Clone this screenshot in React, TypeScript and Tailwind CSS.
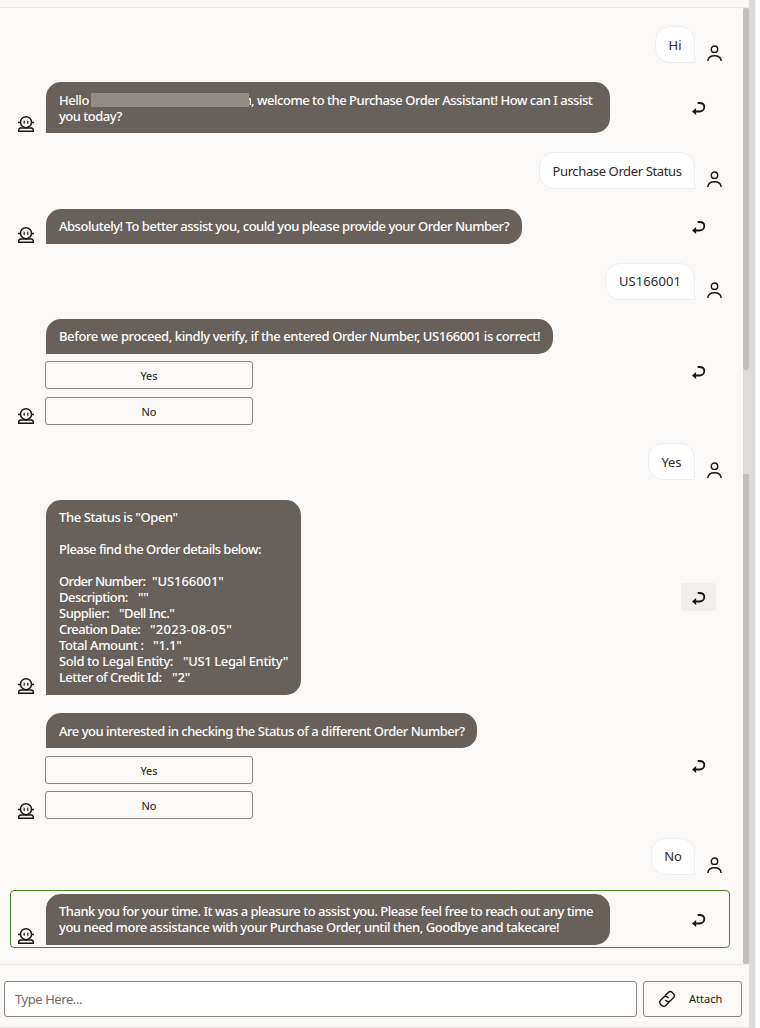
import type { ReactNode } from "react";

function BotIcon() {
  return (
    <svg className="mb-px h-4 w-[18px] shrink-0" viewBox="0 0 18 16" fill="none" stroke="#161513" strokeWidth="1.4">
      <circle cx="9" cy="6.200" r="5.500" />
      <path d="M1 6.500h2.600M14.400 6.500H17" strokeWidth="1.6" />
      <path d="M7.200 4.800v2.900M10.800 4.800v2.900" strokeWidth="1.2" />
      <path d="M1.700 15.200v-1c0-1.300.9-2.200 2.200-2.200h10.200c1.300 0 2.200.9 2.200 2.200v1z" />
    </svg>
  );
}

function UserIcon() {
  return (
    <svg className="h-4 w-4 shrink-0" viewBox="0 0 16 16" fill="none" stroke="#161513" strokeWidth="1.4">
      <circle cx="8.500" cy="4.200" r="3.200" />
      <path d="M1.800 16c.3-3.500 2.900-5.300 6.700-5.300s6.400 1.800 6.700 5.300" />
    </svg>
  );
}

function ReplyIcon() {
  return (
    <svg className="h-[13px] w-[14px]" viewBox="0 0 14 13" fill="none">
      <path d="M5.700 1h1.700c3 0 4.900 1.700 4.900 4.100S10.400 9.500 7.400 9.500H3.300" stroke="#161513" strokeWidth="1.8" />
      <path d="M0 9.500 4.100 5.900v7.100z" fill="#161513" />
    </svg>
  );
}

function AttachIcon() {
  return (
    <svg className="h-[18px] w-[18px]" viewBox="0 0 18 18" fill="none" stroke="#161513" strokeWidth="1.4">
      <g transform="rotate(-45 9 9)">
        <path d="M8.200 12.700H3.600A2.900 2.900 0 0 1 .7 9.800V8.200a2.900 2.900 0 0 1 2.900-2.900h4.300a2.900 2.900 0 0 1 2.900 2.900v1.300" />
        <path d="M9.800 5.300h4.600a2.900 2.900 0 0 1 2.900 2.900v1.600a2.900 2.900 0 0 1-2.900 2.900h-4.300a2.900 2.900 0 0 1-2.900-2.900V8.500" />
      </g>
    </svg>
  );
}

function UserRow({ className, bubble, children }: { className: string; bubble: string; children: ReactNode }) {
  return (
    <div className={`flex shrink-0 items-start justify-end pr-[21px] ${className}`}>
      <div
        className={`flex h-[37px] items-center justify-center rounded-[15px] rounded-br-none border border-[#efeeec] bg-white text-[13px] whitespace-nowrap text-[#2b2a28] ${bubble}`}
      >
        {children}
      </div>
      <div className="ml-[11px] pt-[19px]">
        <UserIcon />
      </div>
    </div>
  );
}

function BotRow({
  className,
  bubble,
  choices,
  reply = "pt-0.5",
  children,
}: {
  className: string;
  bubble: string;
  choices?: string;
  reply?: string;
  children: ReactNode;
}) {
  return (
    <div className={`flex shrink-0 items-end pl-[17px] ${className}`}>
      <BotIcon />
      <div className="ml-[10px] flex flex-col">
        <div
          className={`ml-px flex flex-col justify-center rounded-[15px] rounded-bl-none bg-[#68605a] pl-[13px] text-[13px] leading-4 font-medium whitespace-nowrap text-white ${bubble}`}
        >
          {children}
        </div>
        {choices && (
          <div className={`flex flex-col ${choices}`}>
            <Choice>Yes</Choice>
            <Choice>No</Choice>
          </div>
        )}
      </div>
      <div className="mr-[27px] ml-auto self-center">
        <button className={`flex h-7 w-[35px] items-center justify-center rounded-[3px] ${reply}`}>
          <ReplyIcon />
        </button>
      </div>
    </div>
  );
}

function Choice({ children }: { children: ReactNode }) {
  return (
    <button className="flex h-7 w-[208px] items-center justify-center rounded-[3px] border border-[#8b8580] pt-0.5 text-[11px] text-[#161513]">
      {children}
    </button>
  );
}

function Detail({ label, labelClass, value, valueClass }: { label: string; labelClass: string; value: string; valueClass: string }) {
  return (
    <div className="flex">
      <span className={labelClass}>{label}</span>
      <span className={valueClass}>"{value}"</span>
    </div>
  );
}

export default function App() {
  return (
    <div className="flex h-[1028px] w-[760px] overflow-hidden bg-white font-['Noto_Sans',sans-serif]">
      <div className="flex w-[749px] flex-col border-b border-[#e6e5e3] bg-[#fbf9f8]">
        <div className="h-2 shrink-0 border-b border-[#edebe9]" />
        <div className="flex h-[957px] shrink-0 border-b border-[#edebe9]">
          <div className="flex w-[743px] flex-col">
            <UserRow className="mt-[18px]" bubble="w-10 pt-0.5">
              Hi
            </UserRow>
            <BotRow className="mt-[19px]" bubble="h-[51px] w-[564px]">
              <div className="flex">
                <span className="w-8 tracking-[-0.45px]">Hello</span>
                <span className="mt-px h-[14px] w-[158px] bg-[#928c87]" />
                <span className="-ml-[5px] w-[7px] overflow-hidden [clip-path:inset(0_0_0_5px)]">n</span>
                <span className="tracking-[-0.475px]">, welcome to the Purchase Order Assistant! How can I assist</span>
              </div>
              <div className="tracking-[-0.5px]">you today?</div>
            </BotRow>
            <UserRow className="mt-[19px]" bubble="w-[156px] pt-0.5 tracking-[-0.378px]">
              Purchase Order Status
            </UserRow>
            <BotRow className="mt-[20px]" bubble="h-[35px] w-[476px] pb-0.5 tracking-[-0.476px]">
              Absolutely! To better assist you, could you please provide your Order Number?
            </BotRow>
            <UserRow className="mt-[19px]" bubble="w-[90px] tracking-[0.09px]">
              US166001
            </UserRow>
            <BotRow className="mt-[19px]" bubble="h-[35px] w-[507px] pb-0.5 tracking-[-0.407px]" choices="mt-[7px] gap-2" reply="">
              Before we proceed, kindly verify, if the entered Order Number, US166001 is correct!
            </BotRow>
            <UserRow className="mt-[18px]" bubble="w-[47px] pt-0.5 tracking-[-0.1px]">
              Yes
            </UserRow>
            <BotRow className="mt-[20px]" bubble="h-[195px] w-[255px] pb-0.5" reply="-mt-px bg-[#f0efed] pt-0.5">
              <div className="tracking-[-0.4px]">The Status is "Open"</div>
              <div className="mt-4 mb-4 tracking-[-0.512px]">Please find the Order details below:</div>
              <Detail label="Order Number:" labelClass="w-[93px] tracking-[-0.65px]" value="US166001" valueClass="tracking-[-0.07px]" />
              <Detail label="Description:" labelClass="w-[79px] tracking-[-0.5px]" value="" valueClass="tracking-[-0.45px]" />
              <Detail label="Supplier:" labelClass="w-[60px] tracking-[-0.52px]" value="Dell Inc." valueClass="tracking-[-0.55px]" />
              <Detail label="Creation Date:" labelClass="w-[91px] tracking-[-0.57px]" value="2023-08-05" valueClass="tracking-[0.25px]" />
              <Detail label="Total Amount :" labelClass="w-[94px] tracking-[-0.42px]" value="1.1" valueClass="tracking-[-0.2px]" />
              <Detail label="Sold to Legal Entity:" labelClass="w-[124px] tracking-[-0.4px]" value="US1 Legal Entity" valueClass="tracking-[-0.38px]" />
              <Detail label="Letter of Credit Id:" labelClass="w-[113px] tracking-[-0.57px]" value="2" valueClass="tracking-[-0.2px]" />
            </BotRow>
            <BotRow className="mt-[18px]" bubble="h-[35px] w-[431px] tracking-[-0.485px]" choices="mt-2 gap-[7px] pb-px" reply="">
              Are you interested in checking the Status of a different Order Number?
            </BotRow>
            <UserRow className="mt-[18px]" bubble="w-11">
              No
            </UserRow>
            <div className="mt-[15px] ml-[10px] flex h-[58px] w-[720px] shrink-0 flex-col rounded-[4px] border border-[#508223]">
              <BotRow className="mt-[3px] -mr-[14px] -ml-[11px]" bubble="h-[51px] w-[564px] pb-0.5">
                <div className="tracking-[-0.483px]">
                  Thank you for your time. It was a pleasure to assist you. Please feel free to reach out any time
                </div>
                <div className="tracking-[-0.47px]">
                  you need more assistance with your Purchase Order, until then, Goodbye and takecare!
                </div>
              </BotRow>
            </div>
          </div>
          <div className="flex w-[6px] flex-col bg-[#dcdbd9]">
            <div className="h-[362px] rounded-[3px] bg-[#c1c0be]" />
            <div className="mt-[104px] h-[490px] rounded-b-[3px] bg-[#c1c0be]" />
          </div>
        </div>
        <div className="flex pt-4 pl-1">
          <div className="flex h-9 w-[633px] items-center rounded-[3px] border border-[#8b8580] bg-white pt-0.5 pl-[10px] text-[13px] tracking-[-0.43px] text-[#6f6a66]">
            Type Here...
          </div>
          <button className="ml-[6px] flex h-9 w-[99px] items-center rounded-[3px] border border-[#8b8580] pl-[14px] text-[11px] text-[#161513]">
            <AttachIcon />
            <span className="ml-[13px]">Attach</span>
          </button>
        </div>
      </div>
      <div className="w-[6px] bg-[#dcdbd9]" />
      <div className="w-px bg-[#f3f2f1]" />
    </div>
  );
}
